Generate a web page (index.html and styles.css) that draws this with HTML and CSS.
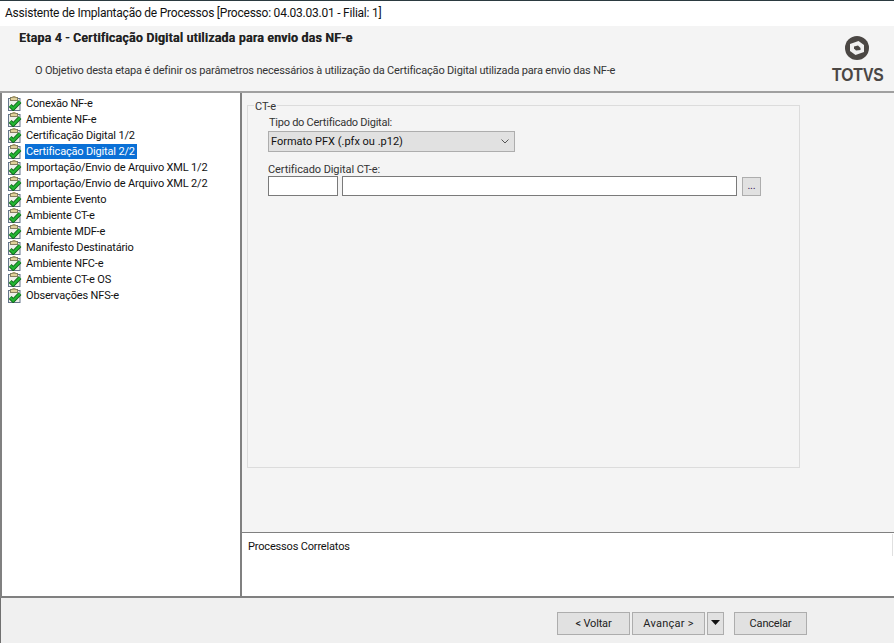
FILE: index.html
```html
<!DOCTYPE html>
<html lang="pt">
<head>
<meta charset="utf-8">
<title>Assistente de Implantação de Processos</title>
<link rel="stylesheet" href="styles.css">
</head>
<body>
<svg class="defs" width="0" height="0" aria-hidden="true">
  <symbol id="task" viewBox="0 0 14 15">
    <rect x="0.5" y="2.5" width="11.5" height="12" fill="#eef0ea" stroke="#66768c"/>
    <rect x="2.5" y="1.5" width="7" height="3" fill="#e0d29a" stroke="#86805f"/>
    <rect x="4.5" y="0" width="3" height="2" fill="#a89c70"/>
    <path d="M2.2 9.5 L5.2 12.6 L12 5.6" fill="none" stroke="#0b5f16" stroke-width="4"/>
    <path d="M2.2 9.5 L5.2 12.6 L12 5.6" fill="none" stroke="#22b432" stroke-width="2.4"/>
  </symbol>
</svg>
<div class="window">
  <div class="titlebar">Assistente de Implantação de Processos [Processo: 04.03.03.01 - Filial: 1]</div>
  <header class="header">
    <div class="header-text">
      <h1 class="step-title">Etapa 4 - Certificação Digital utilizada para envio das NF-e</h1>
      <p class="step-desc">O Objetivo desta etapa é definir os parâmetros necessários à utilização da Certificação Digital utilizada para envio das NF-e</p>
    </div>
    <div class="logo">
      <svg class="logo-mark" viewBox="0 0 24 24" width="24" height="24" aria-hidden="true">
        <circle cx="12" cy="12" r="12" fill="#4b4744"/>
        <path d="M5 8 L13.5 5 L19 9 L19 16 L10.5 19 L5 15 Z" fill="#f0f0f0"/>
        <path d="M9 10.5 L13 9.5 L15.5 12 L15.5 14 L11 14.5 L9 12.5 Z" fill="#4b4744"/>
      </svg>
      <span class="logo-text">TOTVS</span>
    </div>
  </header>
  <main class="body">
    <nav class="tree">
      <div class="tree-item"><svg class="ico"><use href="#task"/></svg><span class="tree-label">Conexão NF-e</span></div>
      <div class="tree-item"><svg class="ico"><use href="#task"/></svg><span class="tree-label">Ambiente NF-e</span></div>
      <div class="tree-item"><svg class="ico"><use href="#task"/></svg><span class="tree-label">Certificação Digital 1/2</span></div>
      <div class="tree-item"><svg class="ico"><use href="#task"/></svg><span class="tree-label selected">Certificação Digital 2/2</span></div>
      <div class="tree-item"><svg class="ico"><use href="#task"/></svg><span class="tree-label">Importação/Envio de Arquivo XML 1/2</span></div>
      <div class="tree-item"><svg class="ico"><use href="#task"/></svg><span class="tree-label">Importação/Envio de Arquivo XML 2/2</span></div>
      <div class="tree-item"><svg class="ico"><use href="#task"/></svg><span class="tree-label">Ambiente Evento</span></div>
      <div class="tree-item"><svg class="ico"><use href="#task"/></svg><span class="tree-label">Ambiente CT-e</span></div>
      <div class="tree-item"><svg class="ico"><use href="#task"/></svg><span class="tree-label">Ambiente MDF-e</span></div>
      <div class="tree-item"><svg class="ico"><use href="#task"/></svg><span class="tree-label">Manifesto Destinatário</span></div>
      <div class="tree-item"><svg class="ico"><use href="#task"/></svg><span class="tree-label">Ambiente NFC-e</span></div>
      <div class="tree-item"><svg class="ico"><use href="#task"/></svg><span class="tree-label">Ambiente CT-e OS</span></div>
      <div class="tree-item"><svg class="ico"><use href="#task"/></svg><span class="tree-label">Observações NFS-e</span></div>
    </nav>
    <section class="content">
      <div class="form-area">
        <div class="group">
          <span class="group-title">CT-e</span>
          <div class="field-label first">Tipo do Certificado Digital:</div>
          <div class="select">
            <span>Formato PFX (.pfx ou .p12)</span>
            <svg class="chev" width="8" height="5" viewBox="0 0 8 5" aria-hidden="true"><path d="M.5 .5 L4 4 L7.5 .5" fill="none" stroke="#555" stroke-width="1"/></svg>
          </div>
          <div class="field-label second">Certificado Digital CT-e:</div>
          <div class="cert-row">
            <div class="input small"></div>
            <div class="input wide"></div>
            <div class="dots">...</div>
          </div>
        </div>
      </div>
      <div class="related">
        <div class="related-text">Processos Correlatos</div>
      </div>
    </section>
  </main>
  <footer class="footer">
    <div class="btn">&lt; Voltar</div>
    <div class="btn next">Avançar &gt;</div>
    <div class="btn arrow"><svg width="9" height="5" viewBox="0 0 9 5" aria-hidden="true"><path d="M0 0 H9 L4.5 5 Z" fill="#111"/></svg></div>
    <div class="btn cancel">Cancelar</div>
  </footer>
</div>
</body>
</html>
```

FILE: styles.css
```css
* { box-sizing: border-box; }
html, body { margin: 0; padding: 0; }
body {
  width: 894px;
  height: 643px;
  overflow: hidden;
  font-family: Roboto, "Noto Sans", sans-serif;
  font-size: 11px;
  letter-spacing: -.17px;
  color: #1a1a1a;
  background: #f0f0f0;
}
.defs { position: absolute; }
.window { display: flex; flex-direction: column; height: 643px; }

.titlebar {
  height: 26px;
  padding: 5px 0 0 5px;
  background: #fff;
  border-top: 1px solid #2b3a40;
  font-size: 12px;
  letter-spacing: -.23px;
  line-height: 15px;
  color: #111;
}

.header {
  height: 67px;
  display: flex;
  justify-content: space-between;
  background: #f4f4f4;
  border-bottom: 2px solid #a0a0a0;
}
.header-text { padding: 5px 0 0 19px; }
.step-title { margin: 0; font-size: 12px; line-height: 15px; font-weight: 500; letter-spacing: .37px; text-shadow: .6px 0 0 #222; color: #222; }
.step-desc { margin: 17px 0 0 16px; font-size: 11px; line-height: 15px; color: #333; }
.logo { width: 54px; margin: 10px 10px 0 0; display: flex; flex-direction: column; align-items: center; }
.logo-mark { display: block; }
.logo-text { font-family: "Liberation Sans", sans-serif; font-weight: 700; font-size: 18px; letter-spacing: 0; line-height: 18px; margin: 6px 0 0 2px; color: #4b4744; transform: scaleX(.87); }

.body { flex: 1; display: flex; min-height: 0; }

.tree {
  width: 242px;
  padding: 2px 0 0 6px;
  background: #fff;
  border-left: 2px solid #808080;
  border-right: 2px solid #808080;
  border-bottom: 2px solid #808080;
}
.tree-item { height: 16px; display: flex; align-items: flex-start; }
.ico { width: 14px; height: 15px; flex: none; margin-top: 1px; }
.tree-label { margin: 1px 0 0 3px; padding: 0 2px 0 1px; line-height: 15px; color: #111; }
.selected { background: #0a70d6; color: #fff; }

.content { flex: 1; display: flex; flex-direction: column; min-width: 0; }
.form-area { flex: 1; padding: 12px 0 0 5px; background: #f4f4f4; }
.group {
  position: relative;
  width: 553px;
  height: 363px;
  border: 1px solid #dcdcdc;
  padding: 9px 0 0 20px;
}
.group-title {
  position: absolute;
  left: 6px;
  top: -7px;
  padding: 0 1px;
  background: #f4f4f4;
  letter-spacing: 0;
  line-height: 15px;
  color: #333;
}
.field-label { line-height: 15px; color: #333; }
.field-label.first { margin-left: 1px; letter-spacing: -.25px; }
.select {
  width: 247px;
  height: 21px;
  margin-top: 1px;
  padding: 0 5px 0 2px;
  display: flex;
  align-items: center;
  justify-content: space-between;
  background: #e1e1e1;
  border: 1px solid #adadad;
  letter-spacing: 0;
  color: #111;
}
.field-label.second { margin-top: 10px; line-height: 14px; padding-top: 1px; height: 14px; letter-spacing: -.09px; }
.cert-row { display: flex; align-items: center; }
.input { height: 20px; background: #fff; border: 1px solid #7a7a7a; }
.input.small { width: 70px; }
.input.wide { width: 395px; margin-left: 4px; }
.dots {
  width: 19px;
  height: 19px;
  margin-left: 5px;
  background: #e1e1e1;
  border: 1px solid #adadad;
  text-align: center;
  line-height: 15px;
  color: #401a60;
}

.related {
  height: 66px;
  background: #fff;
  border-top: 1px solid #808080;
  border-bottom: 2px solid #808080;
  padding: 6px 0 0 6px;
  position: relative;
}
.related::after { content: ""; position: absolute; right: 1px; top: 1px; width: 1px; height: 22px; background: #e0e0e0; }
.related-text { line-height: 15px; color: #111; }

.footer {
  height: 45px;
  display: flex;
  padding: 14px 0 0 556px;
  background: #f0f0f0;
  border-left: 1px solid #707070;
}
.btn {
  width: 73px;
  height: 23px;
  margin-right: 2px;
  background: #e1e1e1;
  border: 1px solid #adadad;
  text-align: center;
  line-height: 21px;
  color: #222;
}
.btn.next { letter-spacing: .25px; }
.btn.arrow { width: 17px; display: flex; align-items: center; justify-content: center; padding-bottom: 3px; }
.btn.cancel { margin-left: 8px; }
```
